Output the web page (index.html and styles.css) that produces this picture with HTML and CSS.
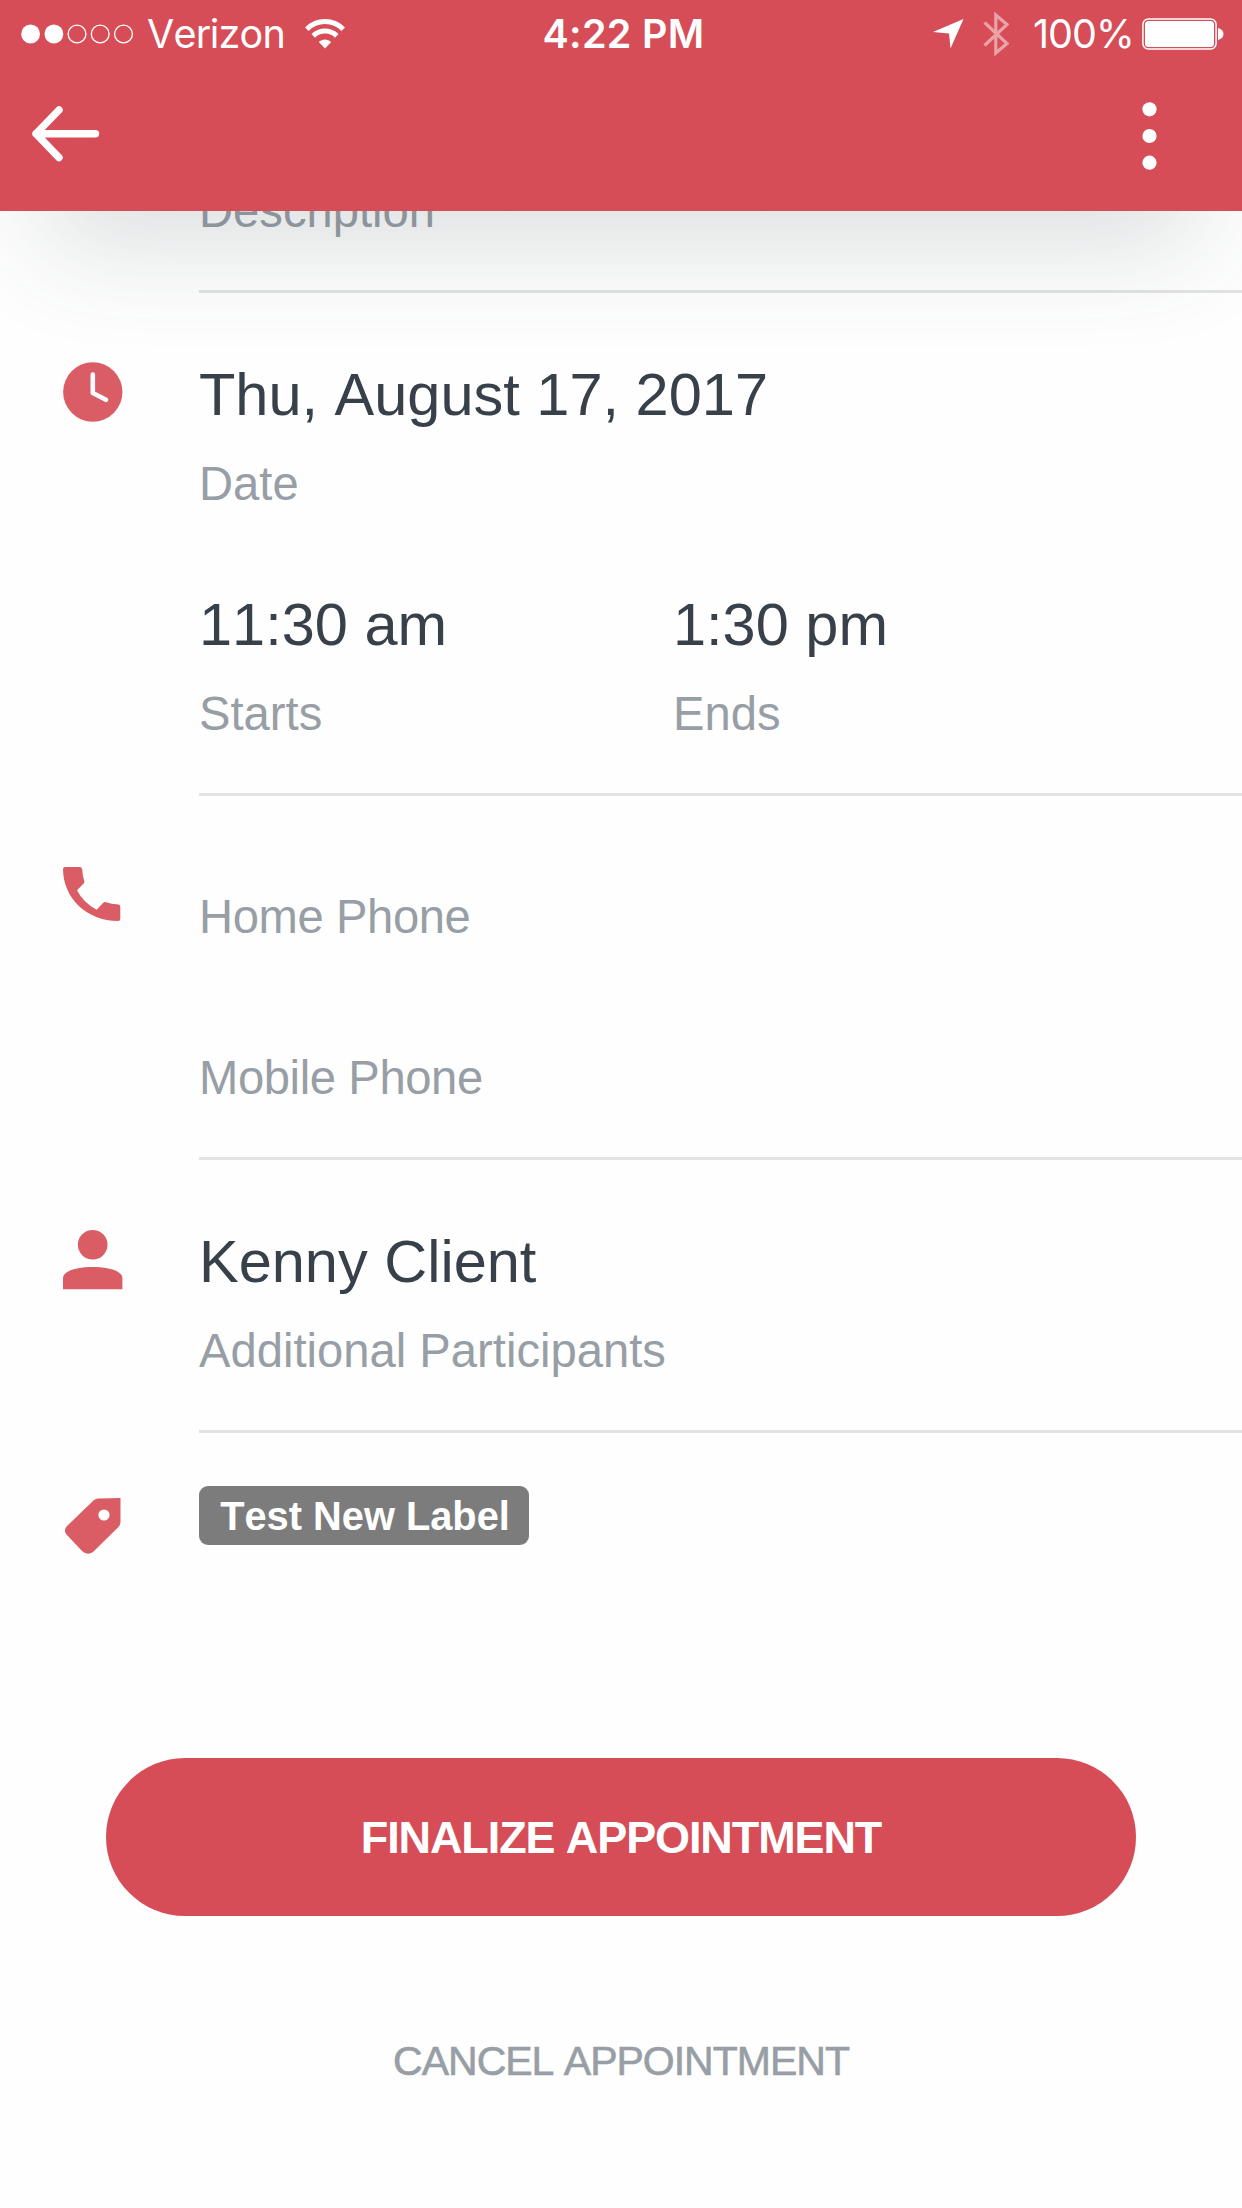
FILE: index.html
```html
<!DOCTYPE html>
<html lang="en">
<head>
<meta charset="utf-8">
<title>Appointment</title>
<link rel="stylesheet" href="styles.css">
</head>
<body>
<header class="app-header">
  <div class="status-bar">
    <div class="status-left">
      <svg class="signal" width="113" height="20" viewBox="0 0 113 20">
        <circle cx="9.6" cy="10" r="9.4" fill="#fff"/><circle cx="32.9" cy="10" r="9.4" fill="#fff"/>
        <g fill="none" stroke="#fff" stroke-width="1.3"><circle cx="56" cy="10" r="8.9"/><circle cx="79.2" cy="10" r="8.9"/><circle cx="102.5" cy="10" r="8.9"/></g>
      </svg>
      <span class="carrier">Verizon</span>
      <svg class="wifi" width="40" height="30" viewBox="0 0 40 30">
        <g fill="none" stroke="#fff" stroke-width="5"><path d="M1.8 10.2C12 0 28 0 38.2 10.2"/><path d="M8.2 16.9C14.8 10.5 25.2 10.5 31.8 16.9"/></g>
        <path d="M13.8 23C17.4 19.6 22.6 19.6 26.2 23L20 29.6Z" fill="#fff"/>
      </svg>
    </div>
    <span class="clock-time">4:22 PM</span>
    <div class="status-right">
      <svg class="location" width="31" height="30" viewBox="0 0 31 30"><path d="M30.5 0L17.5 29.5L16 14.5L0 13Z" fill="#fff"/></svg>
      <svg class="bluetooth" width="26" height="44" viewBox="0 0 26 44"><path d="M1.5 10.5L24 31.5L12.8 41V3L24 12.5L1.5 33.5" fill="none" stroke="#fff" stroke-opacity=".48" stroke-width="3.2"/></svg>
      <span class="percent">100%</span>
      <svg class="battery" width="82" height="32" viewBox="0 0 82 32"><rect x=".9" y=".9" width="73.2" height="30.2" rx="5.5" fill="none" stroke="#fff" stroke-width="1.5"/><rect x="3" y="3" width="69" height="26" rx="3.5" fill="#fff"/><path d="M76 10Q81.5 11.5 81.5 16T76 22Z" fill="#fff"/></svg>
    </div>
  </div>
  <nav class="nav-bar">
    <svg class="back" width="68" height="56" viewBox="0 0 68 56"><path d="M27 4L4 27.8L27 51.6M4 27.8H63.5" fill="none" stroke="#fff" stroke-width="7.4" stroke-linecap="round" stroke-linejoin="round"/></svg>
    <svg class="more" width="15" height="68" viewBox="0 0 15 68"><g fill="#fff"><circle cx="7.5" cy="7.3" r="7.1"/><circle cx="7.5" cy="34" r="7.1"/><circle cx="7.5" cy="60.7" r="7.1"/></g></svg>
  </nav>
</header>

<main class="details">
  <section class="row row-description">
    <div class="content"><div class="label">Description</div></div>
  </section>

  <section class="row">
    <svg class="icon icon-clock" width="60" height="60" viewBox="0 0 60 60"><circle cx="29.8" cy="30" r="29.7"/><path d="M29.8 12.5V31L43 37.8" fill="none" stroke="#fff" stroke-width="4.6" stroke-linecap="round" stroke-linejoin="round"/></svg>
    <div class="content">
      <div class="field"><div class="value">Thu, August 17, 2017</div><div class="label">Date</div></div>
      <div class="times">
        <div class="field"><div class="value">11:30 am</div><div class="label">Starts</div></div>
        <div class="field"><div class="value">1:30 pm</div><div class="label">Ends</div></div>
      </div>
    </div>
  </section>

  <section class="row">
    <svg class="icon icon-phone" width="58" height="55" viewBox="0 0 58 55"><path d="M2 0H17Q19 0 19.2 2.5Q19.6 9 21.3 14Q21.6 15.5 20.6 16.5L14 23.3Q20.5 36 33.6 42.7L40.5 35.6Q41.5 34.7 43 35.2Q48.5 37 55.5 37.4Q57.3 37.6 57.3 39.5V52Q57.3 54 55 54C24 54 0 31 0 2Q0 0 2 0Z"/></svg>
    <div class="content phones">
      <div class="label">Home Phone</div>
      <div class="label">Mobile Phone</div>
    </div>
  </section>

  <section class="row">
    <svg class="icon icon-person" width="60" height="60" viewBox="0 0 60 60"><circle cx="29.7" cy="14.8" r="14.8"/><path d="M0 59.2V48C0 41 14 37 29.7 37S59.4 41 59.4 48V59.2Z"/></svg>
    <div class="content">
      <div class="field"><div class="value">Kenny Client</div><div class="label">Additional Participants</div></div>
    </div>
  </section>

  <section class="row row-tags">
    <svg class="icon icon-tag" width="56" height="57" viewBox="0 0 56 57"><path d="M33 .5Q31 .6 29 2L2 28Q-2 32.5 1.5 36.5L17 53Q22.5 58 28 54L53 29.5Q55.5 27 55.5 24V0Z"/><circle cx="39" cy="17" r="5.6" fill="#fff"/></svg>
    <div class="tags"><span class="tag">Test New Label</span></div>
  </section>
</main>

<footer class="actions">
  <button class="finalize">FINALIZE APPOINTMENT</button>
  <button class="cancel">CANCEL APPOINTMENT</button>
</footer>
</body>
</html>
```
FILE: styles.css
```css
* {
  box-sizing: border-box;
}

body {
  margin: 0;
  width: 1242px;
  height: 2208px;
  overflow: hidden;
  background: #fefefe;
  color: #38414a;
  font-family: "Liberation Sans", Helvetica, Arial, sans-serif;
  font-kerning: none;
}

svg {
  display: block;
  flex: none;
}

/* Header */
.app-header {
  position: relative;
  z-index: 1;
  height: 211px;
  background: #d64d57;
  box-shadow: 0 76px 110px -46px rgba(60, 72, 80, 0.19);
  color: #fff;
}

.status-bar {
  display: grid;
  grid-template-columns: 1fr auto 1fr;
  align-items: center;
  height: 68px;
  padding: 0 18px 0 21px;
  font-family: Inter, sans-serif;
  font-size: 39.5px;
  line-height: 48px;
  white-space: nowrap;
}

.status-left,
.status-right {
  display: flex;
  align-items: center;
}

.status-right {
  justify-content: flex-end;
}

.carrier {
  margin-left: 13px;
  width: 139px;
  letter-spacing: -0.8px;
}

.wifi {
  margin: -1px 0 0 19px;
}

.clock-time {
  padding-left: 2px;
  font-weight: 600;
  letter-spacing: 0.3px;
}

.location {
  margin-right: 19px;
}

.bluetooth {
  margin-right: 24px;
}

.percent {
  width: 101px;
  margin-right: 8px;
  letter-spacing: -1px;
}

.nav-bar {
  display: flex;
  align-items: center;
  justify-content: space-between;
  height: 68px;
  margin-top: 34px;
  padding: 0 85px 0 32px;
}

.back {
  margin-bottom: 4px;
}

/* Detail rows */
.details {
  margin-top: -24px;
}

.row {
  display: grid;
  grid-template-columns: 136px 1fr;
  padding-left: 63px;
  align-items: start;
}

.icon {
  fill: #da5d66;
}

.icon-clock {
  margin-top: 69px;
}

.icon-phone {
  margin-top: 71px;
}

.icon-person {
  margin-top: 70px;
}

.icon-tag {
  margin: 65px 0 0 2px;
}

.content {
  grid-column: 2;
  padding: 72px 0 55px;
  border-bottom: 3px solid #e2e3e5;
}

.row-description .content {
  padding-top: 0;
}

.field {
  display: grid;
  row-gap: 35px;
}

.value {
  font-size: 59.5px;
  line-height: 60px;
}

.label {
  color: #989ea5;
  font-size: 47.2px;
  line-height: 48px;
}

.times {
  display: grid;
  grid-template-columns: 474px 1fr;
  margin-top: 87px;
}

.phones {
  display: grid;
  row-gap: 113px;
  padding-top: 97px;
  letter-spacing: -0.4px;
}

.tags {
  padding-top: 53px;
}

.tag {
  display: block;
  width: 330px;
  height: 59px;
  padding-left: 2px;
  border-radius: 9px;
  background: #7c7c7c;
  color: #fff;
  font-size: 39.8px;
  font-weight: 700;
  line-height: 61px;
  text-align: center;
}

/* Actions */
.actions {
  display: flex;
  flex-direction: column;
  align-items: center;
  gap: 121px;
  padding-top: 203px;
}

button {
  padding: 0;
  border: 0;
  font-family: inherit;
  font-kerning: none;
}

.finalize {
  width: 1030px;
  height: 158px;
  border-radius: 79px;
  background: #d64d57;
  color: #fff;
  font-size: 45px;
  font-weight: 700;
  letter-spacing: -1.1px;
  line-height: 50px;
  padding-top: 2px;
}

.cancel {
  background: none;
  color: #989ea5;
  font-size: 41px;
  line-height: 48px;
  letter-spacing: -1px;
  -webkit-text-stroke: 0.6px #989ea5;
}
```
